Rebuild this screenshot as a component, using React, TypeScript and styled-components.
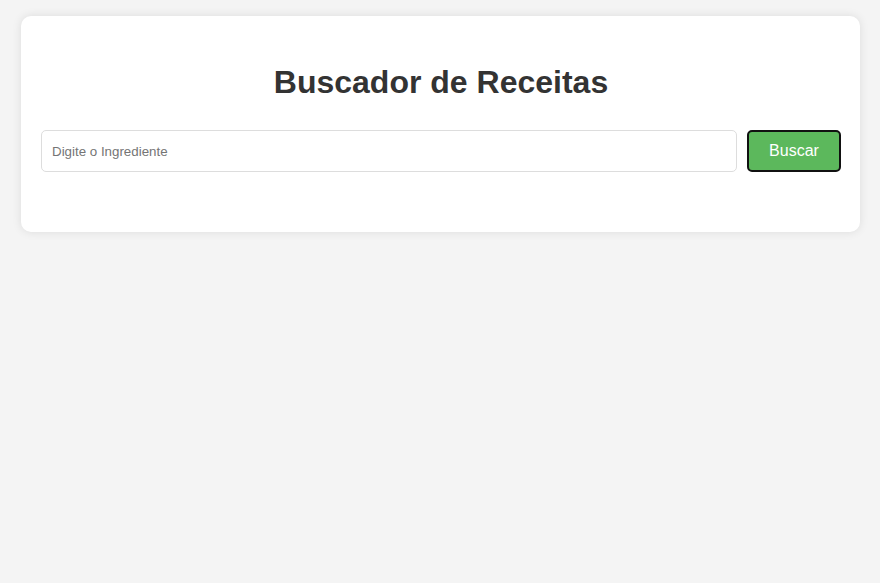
import React from "react";
import styled, { createGlobalStyle } from "styled-components";

const Global = createGlobalStyle`
  html, body { margin: 0; padding: 0; background: #f4f4f4; }
  body { font-family: Arial, "Liberation Sans", sans-serif; }
  * { box-sizing: border-box; }
`;

const Page = styled.div`
  padding: 16px 20px 20px 21px;
`;

const Card = styled.div`
  background: #ffffff;
  border-radius: 10px;
  box-shadow: 0 0 10px rgba(0, 0, 0, 0.1);
  padding: 48px 19px 60px 20px;
`;

const Title = styled.h1`
  margin: 0 0 29px;
  text-align: center;
  font-size: 32px;
  font-weight: bold;
  color: #333333;
  line-height: 37px;
`;

const SearchRow = styled.div`
  display: flex;
  gap: 10px;
`;

const Input = styled.input`
  flex: 1;
  height: 42px;
  padding: 0 10px;
  border: 1px solid #dddddd;
  border-radius: 5px;
  font-family: Arial, "Liberation Sans", sans-serif;
  font-size: 13.33px;
  color: #333;
  outline: none;
  &::placeholder { color: #757575; }
`;

const Button = styled.button`
  width: 94px;
  height: 42px;
  background: #5cb85c;
  color: #ffffff;
  border: 2px solid #111111;
  border-radius: 5px;
  font-family: Arial, "Liberation Sans", sans-serif;
  font-size: 16px;
  cursor: pointer;
`;

export default function App() {
  return (
    <>
      <Global />
      <Page>
        <Card>
          <Title>Buscador de Receitas</Title>
          <SearchRow>
            <Input placeholder="Digite o Ingrediente" />
            <Button>Buscar</Button>
          </SearchRow>
        </Card>
      </Page>
    </>
  );
}
